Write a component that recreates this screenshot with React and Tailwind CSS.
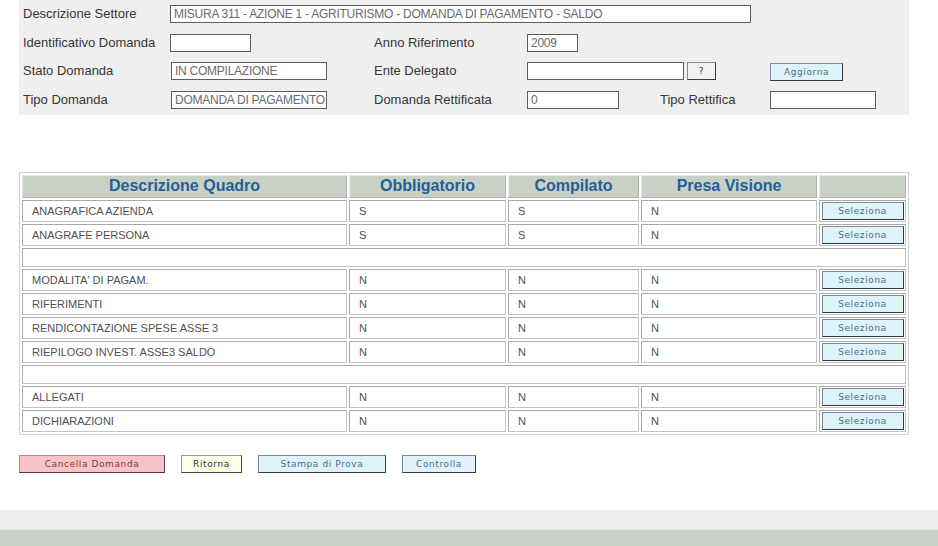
import React from 'react';

const rows = [
  ['ANAGRAFICA AZIENDA', 'S', 'S', 'N'],
  ['ANAGRAFE PERSONA', 'S', 'S', 'N'],
  null,
  ["MODALITA' DI PAGAM.", 'N', 'N', 'N'],
  ['RIFERIMENTI', 'N', 'N', 'N'],
  ['RENDICONTAZIONE SPESE ASSE 3', 'N', 'N', 'N'],
  ['RIEPILOGO INVEST. ASSE3 SALDO', 'N', 'N', 'N'],
  null,
  ['ALLEGATI', 'N', 'N', 'N'],
  ['DICHIARAZIONI', 'N', 'N', 'N'],
];

const Field = ({ value = '', className = '' }) => (
  <div
    className={`h-[18px] border border-[#5c5c5c] bg-white pl-[3px] text-[12px] tracking-[-0.25px] leading-[16px] text-[#6a6a6a] whitespace-nowrap overflow-hidden ${className}`}
  >
    {value}
  </div>
);

const Label = ({ children, className = '' }) => (
  <div className={`shrink-0 text-[13px] text-[#363636] whitespace-nowrap ${className}`}>{children}</div>
);

const SmallBtn = ({ children, className = '' }) => (
  <button
    className={`h-[18px] shrink-0 border border-t-[#7d8b96] border-l-[#7d8b96] border-b-[#2e3b46] border-r-[#2e3b46] font-['DejaVu_Sans',Verdana,sans-serif] text-[9px] tracking-[0.6px] leading-[16px] ${className}`}
  >
    {children}
  </button>
);

const Cell = ({ children }) => (
  <div className="h-[22px] border border-[#a8a8a8] border-b-[#c4c4c4] border-r-[#c4c4c4] bg-white pl-[9px] text-[11px] leading-[20px] text-[#505050] whitespace-nowrap">
    {children}
  </div>
);

const Head = ({ children }) => (
  <div className="h-[23px] border border-[#e4e9e3] border-b-[#aab3a8] border-r-[#aab3a8] bg-[#c9d1c6] text-center text-[16px] font-bold leading-[20px] text-[#22609a]">
    {children}
  </div>
);

export default function App() {
  return (
    <div className="w-[938px] h-[546px] bg-white font-['Liberation_Sans',Arial,sans-serif] overflow-hidden flex flex-col">
      {/* Intestazione domanda */}
      <div className="ml-[19px] w-[890px] h-[115px] bg-[#efefef] pl-[4px]">
        <div className="flex items-center h-[28px]">
          <Label className="w-[147px]">Descrizione Settore</Label>
          <Field className="w-[581px]" value="MISURA 311 - AZIONE 1 - AGRITURISMO - DOMANDA DI PAGAMENTO - SALDO" />
        </div>
        <div className="flex items-center h-[29px]">
          <Label className="w-[147px]">Identificativo Domanda</Label>
          <div className="w-[204px] shrink-0">
            <Field className="w-[81px]" />
          </div>
          <Label className="w-[153px]">Anno Riferimento</Label>
          <Field className="w-[51px]" value="2009" />
        </div>
        <div className="flex items-center h-[28px]">
          <Label className="w-[148px]">Stato Domanda</Label>
          <div className="w-[203px] shrink-0">
            <Field className="w-[156px]" value="IN COMPILAZIONE" />
          </div>
          <Label className="w-[153px]">Ente Delegato</Label>
          <Field className="w-[157px]" />
          <SmallBtn className="ml-[3px] w-[29px] bg-[#f2f2f2] text-[#333]">?</SmallBtn>
          <SmallBtn className="ml-[54px] mt-[2px] w-[73px] bg-[#dff3fb] text-[#4b6f88]">Aggiorna</SmallBtn>
        </div>
        <div className="flex items-center h-[29px]">
          <Label className="w-[148px]">Tipo Domanda</Label>
          <div className="w-[203px] shrink-0">
            <Field className="w-[156px]" value="DOMANDA DI PAGAMENTO" />
          </div>
          <Label className="w-[153px]">Domanda Rettificata</Label>
          <div className="w-[133px] shrink-0">
            <Field className="w-[92px]" value="0" />
          </div>
          <Label className="w-[110px]">Tipo Rettifica</Label>
          <Field className="w-[106px]" />
        </div>
      </div>

      {/* Elenco quadri */}
      <div className="ml-[19px] mt-[57px] w-[890px] border border-[#cfcfcf] p-[2px]">
        <div className="grid grid-cols-[325px_157px_131px_176px_87px] gap-[2px]">
          <Head>Descrizione Quadro</Head>
          <Head>Obbligatorio</Head>
          <Head>Compilato</Head>
          <Head>Presa Visione</Head>
          <Head />
          {rows.map((r, i) =>
            r ? (
              <React.Fragment key={i}>
                <Cell>{r[0]}</Cell>
                <Cell>{r[1]}</Cell>
                <Cell>{r[2]}</Cell>
                <Cell>{r[3]}</Cell>
                <div className="h-[22px] border border-[#a8a8a8] border-b-[#c4c4c4] border-r-[#c4c4c4] bg-white flex items-center justify-center">
                  <SmallBtn className="w-[82px] h-[17px] bg-[#dff3fb] text-[#4b6f88] leading-[15px]">Seleziona</SmallBtn>
                </div>
              </React.Fragment>
            ) : (
              <div key={i} className="col-span-5 h-[19px] border border-[#a8a8a8] border-b-[#c4c4c4] border-r-[#c4c4c4] bg-white" />
            )
          )}
        </div>
      </div>

      {/* Pulsanti */}
      <div className="ml-[19px] mt-[20px] flex gap-[16px]">
        <SmallBtn className="w-[146px] bg-[#f8c3c6] text-[#7b3a45] border-t-[#b08a8e] border-l-[#b08a8e] border-b-[#5a3a3e] border-r-[#5a3a3e]">
          Cancella Domanda
        </SmallBtn>
        <SmallBtn className="w-[61px] bg-[#fefde6] text-[#333] border-t-[#999] border-l-[#999] border-b-[#444] border-r-[#444]">
          Ritorna
        </SmallBtn>
        <SmallBtn className="w-[128px] bg-[#dff3fb] text-[#4b6f88]">Stampa di Prova</SmallBtn>
        <SmallBtn className="w-[74px] bg-[#dff3fb] text-[#4b6f88]">Controlla</SmallBtn>
      </div>

      {/* Footer */}
      <div className="mt-[37px] h-[19px] shrink-0 bg-[#ededed]" />
      <div className="h-[1px] shrink-0 bg-[#e3ebe1]" />
      <div className="flex-1 bg-[#c8d1c6]" />
    </div>
  );
}
